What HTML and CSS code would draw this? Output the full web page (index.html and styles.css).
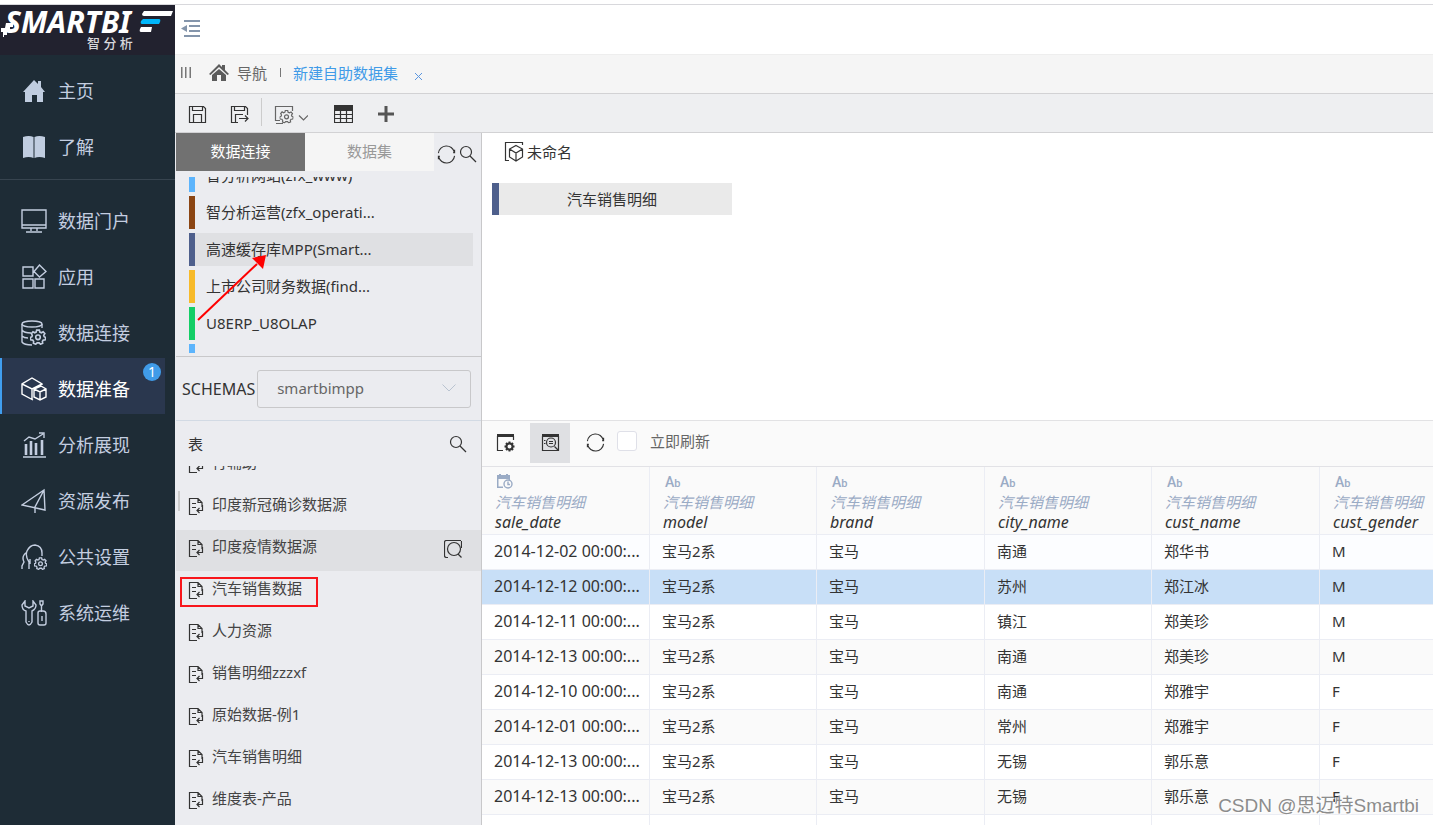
FILE: index.html
```html
<!DOCTYPE html>
<html lang="zh-CN">
<head>
<meta charset="utf-8">
<title>新建自助数据集</title>
<link rel="stylesheet" href="styles.css">
</head>
<body>
<svg class="sprite" aria-hidden="true">
  <symbol id="doc" viewBox="0 0 17 19"><path d="M9 17.500H1.500V1.500H10L14 5.500V10M10 1.500V5.500H14M4 6.500H8M4 10.500H8M14.500 8V13.500H9M11.500 11L9 13.500L11.500 16"/></symbol>
  <symbol id="search" viewBox="0 0 18 18"><circle cx="7" cy="7" r="5.500"/><path d="M11 11L17 17"/></symbol>
  <symbol id="refresh" viewBox="0 0 20 20"><path d="M1.500 8.500A8.500 8.500 0 0 1 18.200 7.500M18.500 11.500A8.500 8.500 0 0 1 1.800 12.500M18.500 5V8H17M1.500 15V12H3"/></symbol>
  <symbol id="gear" viewBox="0 0 14 14"><path d="M5.800 1H8.200L8.600 2.700L10 3.300L11.500 2.400L13 4.100L12 5.600L12.400 6.800L13.800 7.500L13.300 9.500L11.600 9.700L10.800 10.900L11.100 12.500L9.200 13.300L8 12.100H6.200L5 13.300L3 12.500L3.200 10.900L2.400 9.700L.6 9.500L.2 7.500L1.700 6.700L2 5.500L1.200 4.100L2.600 2.400L4.100 3.300L5.400 2.700Z"/><circle cx="7" cy="7.300" r="2"/></symbol>
</svg>

<div class="app">
  <aside class="sidebar">
    <div class="logo">
      <svg class="logo-dots" width="12" height="14" viewBox="0 0 12 14" aria-hidden="true"><path fill="#fff" d="M5 0H12V4H9V8H6V12H3V14H2V9H0V5H4Z"/></svg>
      <div class="logo-row">
        <span class="logo-name">SMARTBI</span>
        <svg class="logo-bars" width="34" height="24" viewBox="0 0 34 24"><path fill="#fff" d="M5 1H34L32 6H5Q3 6 3 4ZM2 17H13L12 22H2Q0 22 1 19Z"/><path fill="#00b7fb" d="M4 9H20Q22 9 21 12L20 14H3Q1 14 2 11Z"/></svg>
      </div>
      <span class="logo-sub">智 分 析</span>
    </div>
    <nav class="menu">
      <a class="menu-item" href="#"><svg class="menu-icon solid" viewBox="0 0 26 26"><path d="M2 14L13 2L17 6V3H20V9L24 14H22V24H16V17H11V24H4V14Z"/></svg>主页</a>
      <a class="menu-item" href="#"><svg class="menu-icon solid" viewBox="0 0 26 26"><path d="M2 3Q8 1 12.500 3V24Q8 22 2 24ZM13.500 3Q18 1 24 3V24Q18 22 13.500 24Z"/></svg>了解</a>
    </nav>
    <nav class="menu menu-main">
      <a class="menu-item" href="#"><svg class="menu-icon" viewBox="0 0 26 26"><path d="M1 2H25V20H1ZM1 17H25M10 20V23M16 20V23M5 24H21"/></svg>数据门户</a>
      <a class="menu-item" href="#"><svg class="menu-icon" viewBox="0 0 26 26"><path d="M2 3H12V12H2ZM2 15H12V24H2ZM14 15H23V24H14ZM18.500 1L25 7.500L18.500 13L13 7.500Z"/></svg>应用</a>
      <a class="menu-item" href="#"><svg class="menu-icon" viewBox="0 0 26 26"><ellipse cx="11" cy="4" rx="10" ry="3"/><path d="M1 4V22Q3 25 11 25M21 4V8M1 10Q3 13 10 13M1 16Q3 18 7 18"/><use href="#gear" x="9" y="9" width="16" height="16"/></svg>数据连接</a>
      <a class="menu-item active" href="#"><svg class="menu-icon" viewBox="0 0 26 26"><path d="M12 24L1 18V8L11 2L21 8V9M1 8L11 13L21 8M11 13V23M20 10L25 13V21L19 24L13 21V13ZM13 13L19 16L25 13M19 16V24"/></svg>数据准备<span class="badge">1</span></a>
      <a class="menu-item" href="#"><svg class="menu-icon" viewBox="0 0 26 26"><path d="M2 25H25M3 9L8 5L14 7L22 2M18 1H23V6"/><path class="bar-stroke" d="M5 12V23M10 9V23M15 11V23M21 8V23"/></svg>分析展现</a>
      <a class="menu-item" href="#"><svg class="menu-icon" viewBox="0 0 26 26"><path d="M1 17L23 2L24 22ZM23 2L14 19V25"/></svg>资源发布</a>
      <a class="menu-item" href="#"><svg class="menu-icon" viewBox="0 0 26 26"><path d="M8 25V18Q4 12 6 7Q9 1 14 1Q21 2 21 9V12M6 8Q0 12 3 18L1 22V25M9 15V20"/><use href="#gear" x="13" y="13" width="13" height="13"/></svg>公共设置</a>
      <a class="menu-item" href="#"><svg class="menu-icon" viewBox="0 0 26 26"><path d="M4 1L1 5Q1 10 5 11V22Q8 28 11 22V11Q15 9 15 5L12 1V6L8 8L4 6ZM19 1H22V4L20.500 6L19 4ZM20.500 6V12M17 13Q17 11 19 11H22Q25 11 25 14V23Q25 25 23 25H19Q17 25 17 23ZM21 16V21M8 21V22"/></svg>系统运维</a>
    </nav>
  </aside>

  <main class="main">
    <header class="topbar">
      <button class="icon-btn" aria-label="收起菜单"><svg width="20" height="18" viewBox="0 0 20 18"><path fill="#8495ab" d="M3 0H19V2H3ZM8 5H19V7H8ZM8 10H19V12H8ZM3 15H19V17H3ZM0 8.500L6 5V12Z"/></svg></button>
    </header>
    <div class="page-tabs">
      <svg width="10" height="11" viewBox="0 0 10 11"><path fill="#777" d="M0 0H1.500V11H0ZM4 0H5.500V11H4ZM8.500 0H10V11H8.500Z"/></svg>
      <a class="home-tab" href="#"><svg width="20" height="18" viewBox="0 0 20 18"><path fill="#5c5c5c" d="M10 0L13 3V1H16V6L20 10L18.500 11L10 3L1.500 11L0 10ZM3 11L10 5L17 11V17H12V11H8V17H3Z"/></svg>导航</a>
      <span class="tab-sep"></span>
      <a class="current-tab" href="#">新建自助数据集</a>
      <button class="close-tab" aria-label="关闭"><svg width="7" height="7" viewBox="0 0 7 7"><path d="M0 0L7 7M7 0L0 7"/></svg></button>
    </div>
    <div class="toolbar">
      <button class="icon-btn" aria-label="保存"><svg class="line" width="19" height="19" viewBox="0 0 19 19"><path d="M1.500 1.500H15.500L17.500 3.500V17.500H1.500ZM4.500 2V5.500H14.500V2M5.500 17V9.500H13.500V17"/></svg></button>
      <button class="icon-btn" aria-label="另存为"><svg class="line" width="19" height="19" viewBox="0 0 19 19"><path d="M8 17.500H1.500V1.500H15.500L17.500 3.500V10M4.500 2V5.500H14.500V2M5.500 17V9.500H13M9 13.500H18M15 10.500L18 13.500L15 16.500"/></svg></button>
      <span class="tool-sep"></span>
      <button class="icon-btn drop" aria-label="设置"><svg class="line grey" width="34" height="19" viewBox="0 0 34 19"><path d="M6 15.500H1.500V1.500H18.500V6M2 18.500H9M25 10.500L29.500 15L34 10.500"/><use href="#gear" x="5.500" y="4.500" width="14" height="14"/></svg></button>
      <button class="icon-btn grid" aria-label="表格"><svg class="line" width="19" height="18" viewBox="0 0 19 18"><path fill="#333" d="M.5 .5H18.500V5.500H.5Z"/><path d="M.5 5.500V17.500H18.500V5.500M.5 9.500H18.500M.5 13.500H18.500M6.500 5V17M12.500 5V17"/></svg></button>
      <button class="icon-btn" aria-label="添加"><svg width="16" height="16" viewBox="0 0 16 16"><path fill="#555" d="M6.500 0H9.500V6.500H16V9.500H9.500V16H6.500V9.500H0V6.500H6.500Z"/></svg></button>
    </div>

    <div class="workspace">
      <section class="side-panel">
        <div class="source-tabs">
          <button class="source-tab selected">数据连接</button>
          <button class="source-tab">数据集</button>
          <button class="icon-btn" aria-label="刷新"><svg class="line" width="19" height="19"><use href="#refresh"/></svg></button>
          <button class="icon-btn" aria-label="搜索"><svg class="line" width="18" height="18"><use href="#search"/></svg></button>
        </div>
        <div class="source-view">
          <ul class="sources">
            <li class="source sky">智分析网站(zfx_www)</li>
            <li class="source brown">智分析运营(zfx_operati...</li>
            <li class="source navy chosen">高速缓存库MPP(Smart...</li>
            <li class="source amber">上市公司财务数据(find...</li>
            <li class="source green">U8ERP_U8OLAP</li>
            <li class="source sky"></li>
          </ul>
        </div>
        <svg class="arrow" width="72" height="70" viewBox="0 0 72 70" aria-hidden="true"><path d="M1 68L60 12" stroke="#fe0000" stroke-width="2"/><path fill="#fe0000" d="M69 3L55 6L66 17Z"/></svg>
        <div class="schema-row">
          <label for="schema">SCHEMAS</label>
          <div class="select-wrap">
            <select id="schema"><option>smartbimpp</option></select>
            <svg class="chevron" width="14" height="8" viewBox="0 0 14 8"><path d="M.5 .5L7 7L13.500 .5"/></svg>
          </div>
        </div>
        <div class="tables-head"><span>表</span><button class="icon-btn" aria-label="搜索表"><svg class="line" width="18" height="18"><use href="#search"/></svg></button></div>
        <div class="tables-view">
          <span class="grip"></span>
          <ul class="tables">
            <li class="table-item"><svg class="line"><use href="#doc"/></svg>行辅助</li>
            <li class="table-item"><svg class="line"><use href="#doc"/></svg>印度新冠确诊数据源</li>
            <li class="table-item hovered"><svg class="line"><use href="#doc"/></svg>印度疫情数据源<button class="icon-btn preview" aria-label="预览"><svg class="line" width="18" height="18" viewBox="0 0 18 18"><path d="M4 17.500H2.500Q.5 17.500 .5 15.500V2.500Q.5 .5 2.500 .5H17M17.500 1V8M14 14L17.500 17.500"/><circle cx="10" cy="9" r="6.500"/></svg></button></li>
            <li class="table-item marked"><svg class="line"><use href="#doc"/></svg>汽车销售数据</li>
            <li class="table-item"><svg class="line"><use href="#doc"/></svg>人力资源</li>
            <li class="table-item"><svg class="line"><use href="#doc"/></svg>销售明细zzzxf</li>
            <li class="table-item"><svg class="line"><use href="#doc"/></svg>原始数据-例1</li>
            <li class="table-item"><svg class="line"><use href="#doc"/></svg>汽车销售明细</li>
            <li class="table-item"><svg class="line"><use href="#doc"/></svg>维度表-产品</li>
          </ul>
        </div>
      </section>

      <section class="content">
        <div class="canvas">
          <h1 class="dataset-name"><svg class="line" width="21" height="20" viewBox="0 0 21 20"><path d="M5 18.500H1.500V.5H18.500V3M12 3.500L18.500 7V15L12 19L5.500 15V7ZM5.500 7L12 11L18.500 7M12 11V19"/></svg>未命名</h1>
          <div class="node">汽车销售明细</div>
        </div>
        <div class="preview-bar">
          <button class="tool" aria-label="数据设置"><svg class="line" width="19" height="19" viewBox="0 0 19 19"><path d="M7 17.500H1.500V3M17.500 3V7"/><path fill="#333" stroke="none" d="M1 1H18V4H1Z"/><circle class="cog-ring" cx="13.500" cy="13.500" r="3"/><path class="cog-teeth" d="M13.500 8.500V10M13.500 17V18.500M8.500 13.500H10M17 13.500H18.500M10 10L11 11M17 10L16 11M10 17L11 16M17 17L16 16"/></svg></button>
          <button class="tool on" aria-label="预览"><svg class="line" width="19" height="19" viewBox="0 0 19 19"><path d="M1.500 3V17.500H17.500V3M3 7.500H4.500M3 10.500H4.500M8 8.500H12M8 10.500H12M13.500 13.500L17.500 17.500"/><circle cx="10" cy="9.500" r="4.500"/><path fill="#333" stroke="none" d="M1 1H18V4H1Z"/></svg></button>
          <button class="tool" aria-label="刷新"><svg class="line" width="19" height="19"><use href="#refresh"/></svg></button>
          <label class="auto"><input type="checkbox">立即刷新</label>
        </div>
        <div class="grid-view">
          <table class="data">
            <colgroup><col class="wide"><col><col class="wide"><col><col class="wide"><col></colgroup>
            <thead><tr>
              <th><span class="type"><svg width="16" height="15" viewBox="0 0 16 15"><path fill="#9aabc5" d="M0 1H2V0H4V1H9V0H11V1H13V6H11.500V5H1.500V12.500H6V14H0Z"/><g fill="none" stroke="#9aabc5" stroke-width="1.400"><circle cx="11" cy="10" r="4"/><path d="M11 7.500V10.500H13"/></g></svg></span><span class="origin">汽车销售明细</span><span class="field">sale_date</span></th>
              <th><span class="type">A<small>b</small></span><span class="origin">汽车销售明细</span><span class="field">model</span></th>
              <th><span class="type">A<small>b</small></span><span class="origin">汽车销售明细</span><span class="field">brand</span></th>
              <th><span class="type">A<small>b</small></span><span class="origin">汽车销售明细</span><span class="field">city_name</span></th>
              <th><span class="type">A<small>b</small></span><span class="origin">汽车销售明细</span><span class="field">cust_name</span></th>
              <th><span class="type">A<small>b</small></span><span class="origin">汽车销售明细</span><span class="field">cust_gender</span></th>
            </tr></thead>
            <tbody>
              <tr><td>2014-12-02 00:00:...</td><td>宝马2系</td><td>宝马</td><td>南通</td><td>郑华书</td><td>M</td></tr>
              <tr class="picked"><td>2014-12-12 00:00:...</td><td>宝马2系</td><td>宝马</td><td>苏州</td><td>郑江冰</td><td>M</td></tr>
              <tr><td>2014-12-11 00:00:...</td><td>宝马2系</td><td>宝马</td><td>镇江</td><td>郑美珍</td><td>M</td></tr>
              <tr><td>2014-12-13 00:00:...</td><td>宝马2系</td><td>宝马</td><td>南通</td><td>郑美珍</td><td>M</td></tr>
              <tr><td>2014-12-10 00:00:...</td><td>宝马2系</td><td>宝马</td><td>南通</td><td>郑雅宇</td><td>F</td></tr>
              <tr><td>2014-12-01 00:00:...</td><td>宝马2系</td><td>宝马</td><td>常州</td><td>郑雅宇</td><td>F</td></tr>
              <tr><td>2014-12-13 00:00:...</td><td>宝马2系</td><td>宝马</td><td>无锡</td><td>郭乐意</td><td>F</td></tr>
              <tr><td>2014-12-13 00:00:...</td><td>宝马2系</td><td>宝马</td><td>无锡</td><td>郭乐意</td><td>F</td></tr>
              <tr><td></td><td></td><td></td><td></td><td></td><td></td></tr>
            </tbody>
          </table>
        </div>
      </section>
    </div>
  </main>
</div>
<div class="watermark">CSDN @思迈特Smartbi</div>
</body>
</html>
```
FILE: styles.css
```css
*, *::after { box-sizing: border-box; }
body {
  margin: 0;
  height: 100vh;
  padding-top: 4px;
  overflow: hidden;
  position: relative;
  background: #fff;
  color: #333;
  font: 15px/20px "Noto Sans", "Noto Sans CJK SC", sans-serif;
}
button { border: 0; padding: 0; background: none; font: inherit; color: inherit; }
a { color: inherit; text-decoration: none; }
ul { list-style: none; margin: 0; padding: 0; }
.sprite { position: absolute; width: 0; height: 0; }
.icon-btn { display: flex; align-items: center; justify-content: center; }
.line { fill: none; stroke: #333; stroke-width: 1.2; flex: none; }
.grey { stroke: #666; }
.cog-ring { stroke-width: 2; }
.cog-teeth { stroke-width: 2; }

.app { display: flex; height: 100%; border-top: 1px solid #d8d8dc; }

.sidebar { flex: none; width: 175px; background: #1e2c36; color: #c4cee0; }
.logo { position: relative; height: 50px; padding: 3px 0 0 5px; background: #22222f; color: #fff; }
.logo-dots { position: absolute; left: 1px; top: 18px; }
.logo-row { display: flex; align-items: center; justify-content: space-between; height: 28px; padding-right: 2px; }
.logo-name { font: italic 700 30px/28px "Noto Sans", sans-serif; }
.logo-sub { display: block; padding-left: 82px; font-size: 13px; line-height: 14px; font-weight: 500; color: #d8d8dc; }
.menu { padding: 5px 0 7px; }
.menu-main { padding-top: 10px; border-top: 1px solid #37444f; }
.menu-item {
  position: relative;
  display: flex;
  align-items: center;
  gap: 11px;
  height: 56px;
  margin-right: 10px;
  padding: 6px 0 0 19px;
  border-left: 2px solid transparent;
  font-size: 18px;
}
.menu-item.active { background: #2a374e; border-color: #409eef; color: #fff; }
.menu-icon { width: 26px; height: 26px; fill: none; stroke: currentColor; stroke-width: 1.4; }
.menu-icon.solid { fill: #c0cde0; stroke: none; }
.bar-stroke { stroke-width: 2.6; }
.badge {
  position: absolute; top: 5px; right: 4px;
  width: 18px; height: 18px; border-radius: 50%;
  background: #409be8; color: #fff;
  font-size: 14px; line-height: 18px; text-align: center;
}

.main { flex: 1; min-width: 0; display: flex; flex-direction: column; }
.topbar { display: flex; align-items: center; height: 49px; padding: 0 0 2px 6px; }
.page-tabs {
  display: flex; align-items: center; height: 40px; padding: 0 0 3px 6px;
  background: #f5f5f5; border-bottom: 1px solid #d2d2d4; border-top: 1px solid #eee;
}
.home-tab { display: flex; align-items: center; gap: 8px; margin-left: 18px; color: #666; }
.tab-sep { width: 1px; height: 9px; margin: 0 12px 0 13px; background: #777; }
.current-tab { color: #409be8; }
.close-tab { display: flex; margin: 7px 0 0 17px; }
.close-tab path { stroke: #5a96e0; }
.toolbar {
  display: flex; align-items: center; height: 39px; padding: 2px 0 0 13px;
  background: #eeeff1; border-bottom: 1px solid #d2d2d4;
}
.toolbar .icon-btn:nth-child(2) { margin-left: 23px; }
.tool-sep { width: 1px; height: 28px; margin: 0 12px 4px; background: #ccc; }
.toolbar .grid { margin: 0 25px 0 26px; }

.workspace { flex: 1; min-height: 0; display: flex; }
.side-panel {
  position: relative; flex: none; width: 307px; padding-left: 1px;
  display: flex; flex-direction: column;
  background: #ebecf0; border-right: 1px solid #c8c8ca;
}
.source-tabs { display: flex; height: 38px; padding-right: 3px; }
.source-tab { flex: 1; padding-bottom: 2px; background: #f5f5f5; color: #999; }
.source-tab.selected { background: #717171; color: #fff; }
.source-tabs .icon-btn { width: 20px; margin-top: 4px; }
.source-tabs .icon-btn:nth-child(3) { width: 24px; }
.source-view { height: 186px; padding: 6px 8px 3px 13px; border-bottom: 1px solid #c8c8ca; }
.sources { height: 176px; overflow: hidden; display: flex; flex-direction: column; justify-content: flex-end; gap: 4px; }
.source {
  flex: none; height: 33px; padding-left: 11px;
  border-left: 6px solid; line-height: 32px;
}
.source:last-child { height: 9px; }
.chosen { background: #dfe0e3; }
.sky { border-left-color: #5cb4fc; }
.brown { border-left-color: #8b4513; }
.navy { border-left-color: #4e5f8c; }
.amber { border-left-color: #f7ba2a; }
.green { border-left-color: #13ce66; }
.arrow { position: absolute; left: 22px; top: 119px; }
.schema-row {
  display: flex; align-items: center; gap: 2px; height: 64px; padding: 0 10px 0 6px;
  border-bottom: 1px solid #d2dae4;
}
.schema-row label { font-size: 16px; }
.select-wrap { position: relative; flex: 1; }
.select-wrap select {
  appearance: none; display: block; width: 100%; height: 38px; padding: 0 19px 2px;
  border: 1px solid #c8c8ca; border-radius: 3px; background: transparent;
  color: #666; font: inherit;
}
.chevron { position: absolute; right: 15px; top: 14px; fill: none; stroke: #b9c3d0; }
.tables-head { display: flex; justify-content: space-between; align-items: center; height: 45px; padding: 0 14px 0 12px; }
.tables-view { position: relative; flex: 1; min-height: 0; overflow: hidden; }
.grip { position: absolute; left: 2px; top: 25px; width: 2px; height: 20px; background: #ccc; z-index: 1; }
.tables { margin-top: -20px; }
.table-item { position: relative; display: flex; align-items: center; gap: 7px; height: 42px; padding: 0 19px 10px 12px; color: #444; }
.table-item > svg { width: 17px; height: 19px; margin-top: 4px; }
.table-item.hovered { background: linear-gradient(#dfe0e3, #dfe0e3) 0 0 / 100% 41px no-repeat; }
.preview { margin: 6px 0 0 auto; }
.marked::after { content: ""; position: absolute; left: 4px; top: 5px; width: 138px; height: 30px; border: 2px solid #f8161c; }

.content { flex: 1; min-width: 0; display: flex; flex-direction: column; }
.canvas { height: 288px; padding: 9px 10px; border-bottom: 1px solid #e2e2e4; }
.dataset-name { display: flex; align-items: center; gap: 2px; margin: 0 0 21px; padding-left: 12px; font-size: 15px; font-weight: 400; line-height: 20px; }
.node { width: 240px; height: 32px; border-left: 7px solid #4e5f8c; padding-right: 7px; background: #eaeaea; line-height: 32px; text-align: center; }
.preview-bar { display: flex; align-items: center; gap: 5px; height: 46px; padding: 0 3px 2px; background: #fafafa; border-bottom: 1px solid #e2e2e6; }
.tool { display: flex; align-items: center; justify-content: center; width: 40px; height: 40px; }
.tool.on { background: #dfe0e3; }
.auto { display: flex; align-items: center; gap: 13px; margin-left: -3px; padding-bottom: 3px; color: #666; }
.auto input { appearance: none; width: 20px; height: 20px; margin: 0; border: 1px solid #dfe0e8; border-radius: 3px; background: #fff; }
.grid-view { flex: 1; min-height: 0; overflow: hidden; }
.data { width: 1005px; table-layout: fixed; border-collapse: separate; border-spacing: 0; }
.data col { width: 167px; }
.data col.wide { width: 168px; }
.data th, .data td { border: solid #ebedf4; border-width: 0 1px 1px 0; white-space: nowrap; text-align: left; }
.data th { height: 68px; padding: 4px 0 1px 13px; background: #fafafa; font-weight: 400; font-style: italic; }
.data th span { display: block; }
.data .type { height: 20px; color: #9aabc5; font: 500 14px/20px Roboto, sans-serif; padding-left: 2px; }
.data .type svg { display: block; height: 20px; padding: 2px 0 3px; }
.data .type small { font-size: 11px; }
.data .origin { color: #9aabc5; }
.data .field { font-size: 16px; }
.data td { height: 35px; padding: 0 0 2px 12px; }
.data td:first-child { font-size: 16px; }
.data tbody tr:nth-child(even) { background: #fafafa; }
.data tbody tr:first-child { background: #fcfdff; }
.data tbody tr.picked { background: #c8dff7; }

.watermark {
  position: absolute; right: 14px; bottom: 6px;
  color: #8c8c8c; font: 19px/26px "Liberation Sans", "Noto Sans CJK SC", sans-serif;
  text-shadow: 1px 1px 1px #fff;
}
```
